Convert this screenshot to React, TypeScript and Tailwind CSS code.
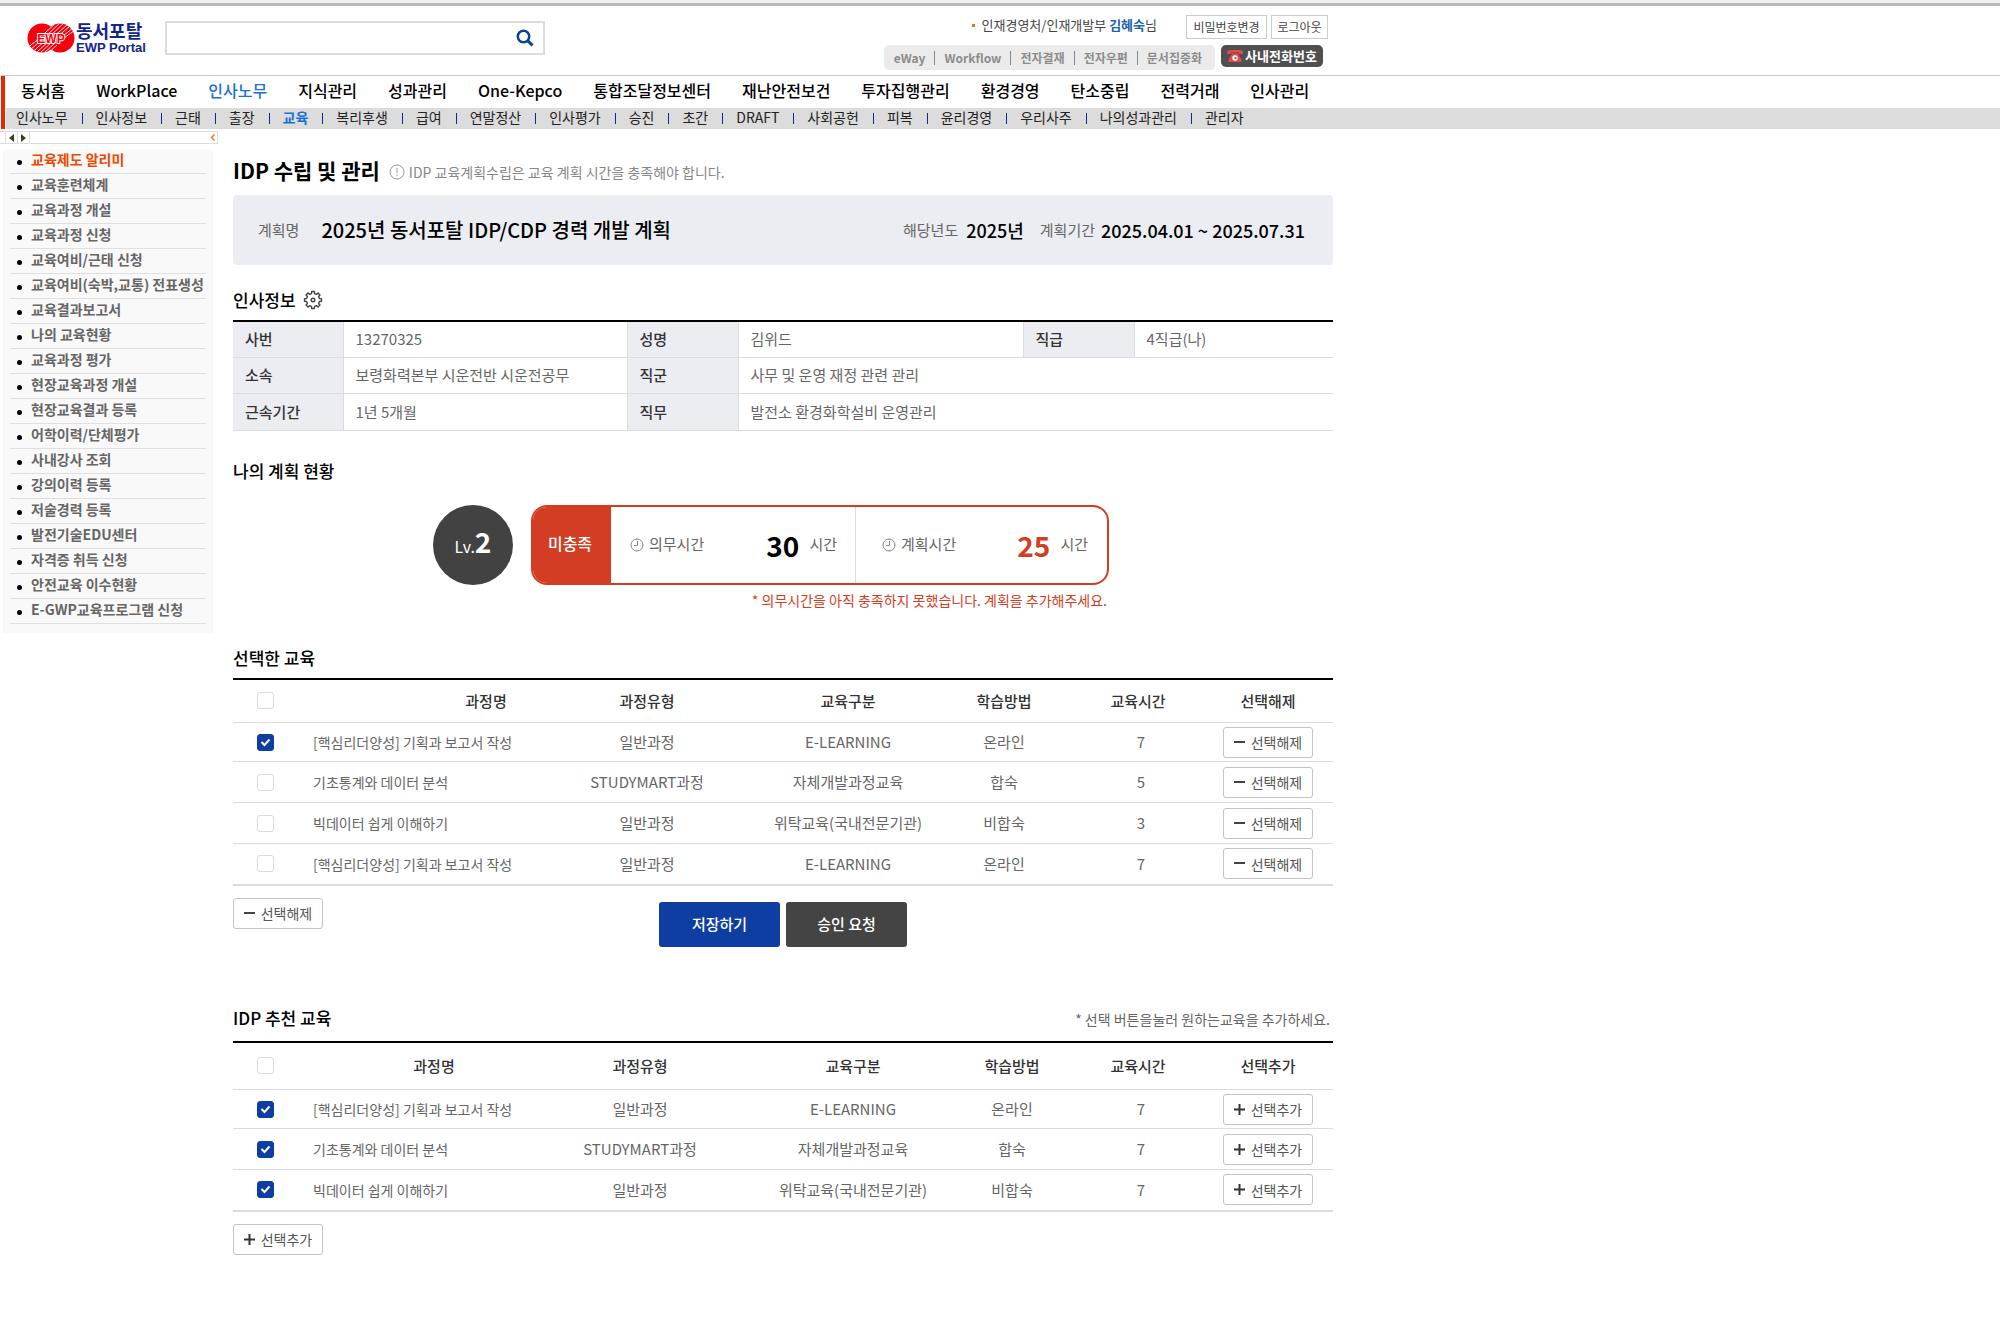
import React from "react";

const mainMenu = ["동서홈", "WorkPlace", "인사노무", "지식관리", "성과관리", "One-Kepco", "통합조달정보센터", "재난안전보건", "투자집행관리", "환경경영", "탄소중립", "전력거래", "인사관리"];

const subMenu = ["인사노무", "인사정보", "근태", "출장", "교육", "복리후생", "급여", "연말정산", "인사평가", "승진", "초간", "DRAFT", "사회공헌", "피복", "윤리경영", "우리사주", "나의성과관리", "관리자"];

const sideMenu = ["교육제도 알리미", "교육훈련체계", "교육과정 개설", "교육과정 신청", "교육여비/근태 신청", "교육여비(숙박,교통) 전표생성", "교육결과보고서", "나의 교육현황", "교육과정 평가", "현장교육과정 개설", "현장교육결과 등록", "어학이력/단체평가", "사내강사 조회", "강의이력 등록", "저술경력 등록", "발전기술EDU센터", "자격증 취득 신청", "안전교육 이수현황", "E-GWP교육프로그램 신청"];

const quickLinks = ["eWay", "Workflow", "전자결재", "전자우편", "문서집중화"];

type Course = { name: string; type: string; kind: string; method: string; hours: number; checked: boolean };

const selectedCourses: Course[] = [
  { name: "[핵심리더양성] 기획과 보고서 작성", type: "일반과정", kind: "E-LEARNING", method: "온라인", hours: 7, checked: true },
  { name: "기초통계와 데이터 분석", type: "STUDYMART과정", kind: "자체개발과정교육", method: "합숙", hours: 5, checked: false },
  { name: "빅데이터 쉽게 이해하기", type: "일반과정", kind: "위탁교육(국내전문기관)", method: "비합숙", hours: 3, checked: false },
  { name: "[핵심리더양성] 기획과 보고서 작성", type: "일반과정", kind: "E-LEARNING", method: "온라인", hours: 7, checked: false },
];

const recommendedCourses: Course[] = [
  { name: "[핵심리더양성] 기획과 보고서 작성", type: "일반과정", kind: "E-LEARNING", method: "온라인", hours: 7, checked: true },
  { name: "기초통계와 데이터 분석", type: "STUDYMART과정", kind: "자체개발과정교육", method: "합숙", hours: 7, checked: true },
  { name: "빅데이터 쉽게 이해하기", type: "일반과정", kind: "위탁교육(국내전문기관)", method: "비합숙", hours: 7, checked: true },
];

function LogoMark() {
  return (
    <svg width="48" height="30" viewBox="0 0 48 30" aria-hidden="true">
      <defs>
        <clipPath id="mark">
          <circle cx="15" cy="15" r="14.5" />
          <circle cx="33" cy="15" r="14.5" />
        </clipPath>
      </defs>
      <circle cx="15" cy="15" r="14.5" fill="#f5000c" />
      <circle cx="33" cy="15" r="14.5" fill="#f5000c" />
      <g clipPath="url(#mark)" stroke="#fff" strokeWidth="0.9">
        <path d="M0 25 13 15M2 28 18 14M5 29.500 22 14M8 31 25 15M12 31 28 16M16 31 29 19M20 31 30 22" />
        <path d="M18 10 29 0M19 13 33 0M21 15 37 0M24 16 41 1M28 16 44 2M32 16 46 5M37 15 48 7" />
      </g>
      <text x="24" y="20" textAnchor="middle" fontSize="12" fontWeight="700" fill="#f5000c" stroke="#fff" strokeWidth="1.8" paintOrder="stroke" fontFamily="Liberation Sans, sans-serif">EWP</text>
    </svg>
  );
}

function PhoneIcon() {
  return (
    <svg width="16" height="14" viewBox="0 0 16 14" aria-hidden="true">
      <path d="M0 5V3.500Q0 1 4 1h8q4 0 4 2.500V5h-4V3.500H4V5Z" fill="#e8484b" />
      <path d="M5 4.500h6l1 2 2.500 4V13h-13v-2.500L4 6.500Z" fill="#e8484b" />
      <circle cx="8" cy="9" r="2.700" fill="#fff" />
      <circle cx="8.500" cy="9" r="1.200" fill="#777" />
    </svg>
  );
}

function GearIcon() {
  const teeth = 8;
  const points: string[] = [];
  for (let i = 0; i < teeth; i++) {
    [[-0.3, 6.6], [-0.2, 8.6], [0.2, 8.6], [0.3, 6.6]].forEach(([offset, radius]) => {
      const a = ((i + offset) / teeth) * Math.PI * 2;
      points.push(`${(10 + radius * Math.sin(a)).toFixed(2)},${(10 - radius * Math.cos(a)).toFixed(2)}`);
    });
  }
  return (
    <svg width="20" height="20" viewBox="0 0 20 20" fill="none" stroke="#444" strokeWidth="1.400" strokeLinejoin="round" aria-hidden="true">
      <polygon points={points.join(" ")} />
      <circle cx="10" cy="10" r="1.800" />
    </svg>
  );
}

function InfoIcon() {
  return (
    <svg width="16" height="16" viewBox="0 0 16 16" fill="none" stroke="#999" aria-hidden="true">
      <circle cx="8" cy="8" r="7" />
      <path d="M8 4v5M8 10.500v1.500" />
    </svg>
  );
}

function ClockIcon() {
  return (
    <svg width="14" height="14" viewBox="0 0 14 14" fill="none" stroke="#888" aria-hidden="true">
      <circle cx="7" cy="7" r="6" />
      <path d="M7.500 3v4.500H4" />
      <path d="M7 1v1M7 12v1M12 7h1" />
    </svg>
  );
}

function Check({ checked, label }: { checked?: boolean; label: string }) {
  return (
    <span className="relative mx-auto block size-[17px]">
      <input
        type="checkbox"
        defaultChecked={checked}
        aria-label={label}
        className="peer block size-[17px] appearance-none rounded-[3px] border border-[#dcdcdc] bg-white checked:border-[#0f3ea3] checked:bg-[#0f3ea3]"
      />
      <svg className="pointer-events-none absolute inset-0 hidden peer-checked:block" width="17" height="17" viewBox="0 0 17 17" fill="none" stroke="#fff" strokeWidth="2" aria-hidden="true">
        <path d="M4.500 8 7.500 11 12.500 5.500" />
      </svg>
    </span>
  );
}

function RowButton({ kind }: { kind: "remove" | "add" }) {
  return (
    <button type="button" className="inline-flex h-[31px] w-[90px] items-center justify-center gap-[6px] rounded-[3px] border border-[#c4c4c4] bg-white align-middle text-sm text-[#555]">
      <svg width="11" height="11" viewBox="0 0 11 11" fill="none" stroke={kind === "add" ? "#333" : "#444"} strokeWidth="2" aria-hidden="true">
        <path d={kind === "add" ? "M0 5.500h11M5.500 0v11" : "M0 5h11"} />
      </svg>
      {kind === "add" ? "선택추가" : "선택해제"}
    </button>
  );
}

function CourseTable({ courses, kind }: { courses: Course[]; kind: "remove" | "add" }) {
  const add = kind === "add";
  return (
    <table className="w-full table-fixed border-t-2 border-b-2 border-t-black border-b-[#dcdcdc] text-center text-[15px] leading-5 text-[#666]">
      <colgroup>
        <col className="w-[64px]" />
        <col className={add ? "w-[228px]" : "w-[236px]"} />
        <col className={add ? "w-[230px]" : "w-[228px]"} />
        <col className={add ? "w-[196px]" : "w-[174px]"} />
        <col className={add ? "w-[122px]" : "w-[138px]"} />
        <col className="w-[130px]" />
        <col className="w-[130px]" />
      </colgroup>
      <thead>
        <tr className={add ? "h-[48px] text-[#333]" : "h-[44px] text-[#333]"}>
          <th><Check label="전체 선택" /></th>
          <th className={add ? "pl-[46px] font-medium" : "pl-[142px] font-medium"}>과정명</th>
          <th className="font-medium">과정유형</th>
          <th className="font-medium">교육구분</th>
          <th className="font-medium">학습방법</th>
          <th className="font-medium">교육시간</th>
          <th className="font-medium">{add ? "선택추가" : "선택해제"}</th>
        </tr>
      </thead>
      <tbody>
        {courses.map((c, i) => (
          <tr key={i} className="h-[41px] border-t border-[#dcdcdc] first:h-[39px]">
            <td><Check checked={c.checked} label={c.name} /></td>
            <td className="pl-4 text-left text-sm whitespace-nowrap">{c.name}</td>
            <td>{c.type}</td>
            <td className="whitespace-nowrap">{c.kind}</td>
            <td>{c.method}</td>
            <td className="pl-[6px]">{c.hours}</td>
            <td><RowButton kind={kind} /></td>
          </tr>
        ))}
      </tbody>
    </table>
  );
}

function Label({ children }: { children: React.ReactNode }) {
  return <th scope="row" className="border-x border-[#dcdcdc] bg-[#ecedf2] pl-3 text-left font-medium text-[#333] first:border-l-0">{children}</th>;
}

function Hours({ label, value, accent }: { label: string; value: number; accent?: boolean }) {
  return (
    <div className={accent ? "flex w-[252px] items-center border-l border-[#dcdcdc] pr-[19px] pl-[26px]" : "flex flex-1 items-center pr-[18px] pl-[19px]"}>
      <ClockIcon />
      <span className="ml-[5px]">{label}</span>
      <span className={accent ? "ml-auto text-[28px] font-bold text-[#d33d23]" : "ml-auto text-[28px] font-bold text-black"}>{value}</span>
      <span className="ml-[10px]">시간</span>
    </div>
  );
}

export default function App() {
  return (
    <div className="min-h-screen bg-white font-['Noto_Sans_CJK_KR','Noto_Sans_CJK_SC',sans-serif] text-black">
      <div className="h-[6px] border-b-[3px] border-[#b8b8b8] bg-[#f0f0f0]" />

      <header className="flex h-[69px] max-w-[1333px] pl-[27px]">
        <a href="#" className="mt-[14px] flex h-[36px] w-[120px] items-center gap-px" aria-label="동서포탈 EWP Portal">
          <LogoMark />
          <span className="flex flex-col text-[#14258c]">
            <span className="text-lg leading-5 font-bold">동서포탈</span>
            <span className="font-['Liberation_Sans',sans-serif] text-[13px] leading-4 font-bold whitespace-nowrap">EWP Portal</span>
          </span>
        </a>
        <form className="mt-[15px] ml-[18px] flex h-[34px] w-[380px] items-center border-2 border-[#dcdcdc]" onSubmit={(e) => e.preventDefault()}>
          <input type="text" aria-label="검색" className="h-full min-w-0 flex-1 px-2 text-sm outline-none" />
          <button type="submit" aria-label="검색" className="mr-[9px]">
            <svg width="18" height="18" viewBox="0 0 18 18" fill="none" stroke="#0b3f99" strokeWidth="2.500" aria-hidden="true">
              <circle cx="7.500" cy="7.500" r="5.700" />
              <path d="m11.500 11.500 5 5" strokeWidth="3" />
            </svg>
          </button>
        </form>

        <div className="ml-auto flex flex-col items-end">
          <div className="mt-[9px] mr-[5px] flex items-center gap-1">
            <p className="mr-[25px] mb-1 flex items-center text-[13px] leading-5 text-[#444]">
              <span className="mr-[7px] size-[3px] bg-[#f07020]" />
              인재경영처/인재개발부&nbsp;<b className="text-[#1c64ac]">김혜숙</b>님
            </p>
            <button type="button" className="h-6 w-[81px] border border-[#ccc] text-xs text-[#444]">비밀번호변경</button>
            <button type="button" className="h-6 w-[57px] border border-[#ccc] text-xs text-[#444]">로그아웃</button>
          </div>
          <div className="mt-[6px] mr-[10px] flex items-start gap-[6px]">
            <nav className="flex h-[25px] items-center rounded-[5px] bg-[#ebebeb] pr-1 pl-[10px] text-xs font-bold text-[#8c8c8c]">
              {quickLinks.map((q) => (
                <a key={q} href="#" className="mr-[9px] border-l border-[#888] pl-[9px] leading-[14px] first:border-l-0 first:pl-0">{q}</a>
              ))}
            </nav>
            <button type="button" className="flex h-[22px] w-[102px] items-center justify-center gap-[2px] rounded-[5px] bg-[#505050] text-[13px] font-bold text-white">
              <PhoneIcon />
              사내전화번호
            </button>
          </div>
        </div>
      </header>

      <div className="ml-px border-t border-[#c8c8c8]">
        <div className="border-l-4 border-[#e82800]">
          <nav className="flex h-[32px] items-center gap-[31px] pb-[5px] pl-4 text-base font-medium whitespace-nowrap">
            {mainMenu.map((m, i) => (
              <a key={m} href="#" className={i === 2 ? "text-[#1b70d8]" : ""}>{m}</a>
            ))}
          </nav>
          <nav className="ml-px flex h-[21px] items-center bg-[#dcdcdc] pb-[4px] text-sm leading-4 whitespace-nowrap text-[#222]">
            {subMenu.map((m, i) => (
              <span key={i} className="flex items-center">
                {i > 0 && <i className="mt-[3px] h-[11px] w-px bg-[#14258c]" />}
                <a href="#" className={i === 4 ? "mr-[14px] ml-[13px] font-bold text-[#1b70d8]" : i === 0 ? "mr-[14px] ml-[10px]" : "mr-[14px] ml-[13px]"}>{m}</a>
              </span>
            ))}
          </nav>
        </div>
      </div>

      <div className="flex">
        <aside className="w-[218px] shrink-0">
          <div className="mt-[2px] flex h-[13px] items-center justify-between border border-l-0 border-[#ddd] pr-[2px]">
            <div className="flex h-full pl-[5px]">
              <button type="button" aria-label="이전" className="flex w-3 items-center justify-center border-l border-[#ddd]">
                <svg width="5" height="8" viewBox="0 0 5 8" aria-hidden="true"><path d="M5 0v8L0 4Z" fill="#3c4020" /></svg>
              </button>
              <button type="button" aria-label="다음" className="flex w-[13px] items-center justify-center border-x border-[#ddd]">
                <svg width="5" height="8" viewBox="0 0 5 8" aria-hidden="true"><path d="M0 0v8l5-4Z" fill="#3c4020" /></svg>
              </button>
            </div>
            <button type="button" aria-label="메뉴 접기">
              <svg width="5" height="7" viewBox="0 0 5 7" fill="none" stroke="#f07830" strokeWidth="1.500" aria-hidden="true"><path d="M4.500.5l-3 3 3 3" /></svg>
            </button>
          </div>
          <ul className="mt-[5px] mr-[5px] ml-[3px] bg-[#f9f9f9] px-[7px] pb-[9px]">
            {sideMenu.map((m, i) => (
              <li key={m} className="flex h-[25px] items-center border-b border-[#e0e0e0] pb-[4px] pl-[7px]">
                <span className="mt-[7px] mr-[9px] size-[5px] rounded-full bg-black" />
                <a href="#" className={i === 0 ? "text-sm leading-5 font-bold whitespace-nowrap text-[#f04800]" : "text-sm leading-5 font-bold whitespace-nowrap text-[#666]"}>{m}</a>
              </li>
            ))}
          </ul>
        </aside>

        <main className="ml-[15px] w-full max-w-[1100px]">
          <div className="mt-[24px] flex h-[38px] items-center">
            <h1 className="pb-[3px] text-[21px] font-bold">IDP 수립 및 관리</h1>
            <p className="ml-[9px] flex items-center gap-[4px] text-sm text-[#888]">
              <InfoIcon />
              IDP 교육계획수립은 교육 계획 시간을 충족해야 합니다.
            </p>
          </div>

          <section className="mt-[4px] flex h-[70px] items-center rounded-[4px] bg-[#ecedf2] pr-[28px] pl-[25px] text-[15px] text-[#666]">
            <span>계획명</span>
            <strong className="ml-[22px] text-xl font-medium text-black">2025년 동서포탈 IDP/CDP 경력 개발 계획</strong>
            <span className="ml-auto">해당년도</span>
            <strong className="ml-[8px] text-lg font-medium text-black">2025년</strong>
            <span className="ml-[16px]">계획기간</span>
            <strong className="ml-[6px] text-lg font-medium text-black">2025.04.01 ~ 2025.07.31</strong>
          </section>

          <div className="mt-[22px] flex h-[25px] items-center gap-[7px]">
            <h2 className="text-[17px] font-medium">인사정보</h2>
            <button type="button" aria-label="설정"><GearIcon /></button>
          </div>
          <table className="mt-[8px] w-full table-fixed border-t-2 border-t-black text-[15px] leading-5 text-[#666]">
            <colgroup>
              <col className="w-[110px]" />
              <col className="w-[284px]" />
              <col className="w-[111px]" />
              <col className="w-[285px]" />
              <col className="w-[111px]" />
              <col className="w-[199px]" />
            </colgroup>
            <tbody>
              <tr className="h-[36px] border-b border-[#dcdcdc]">
                <Label>사번</Label><td className="pl-3">13270325</td>
                <Label>성명</Label><td className="pl-3">김위드</td>
                <Label>직급</Label><td className="pl-3">4직급(나)</td>
              </tr>
              <tr className="h-[36px] border-b border-[#dcdcdc]">
                <Label>소속</Label><td className="pl-3">보령화력본부 시운전반 시운전공무</td>
                <Label>직군</Label><td className="pl-3" colSpan={3}>사무 및 운영 재정 관련 관리</td>
              </tr>
              <tr className="h-[37px] border-b border-[#dcdcdc]">
                <Label>근속기간</Label><td className="pl-3">1년 5개월</td>
                <Label>직무</Label><td className="pl-3" colSpan={3}>발전소 환경화학설비 운영관리</td>
              </tr>
            </tbody>
          </table>

          <h2 className="mt-[27px] text-[17px] leading-[25px] font-medium">나의 계획 현황</h2>
          <div className="mt-[22px] flex justify-center gap-[18px] pr-[24px]">
            <div className="flex size-20 items-baseline justify-center rounded-full bg-[#424242] pt-[14px] text-white">
              <span className="text-base">Lv.</span>
              <span className="text-[28px] leading-[44px] font-bold">2</span>
            </div>
            <div className="w-[578px]">
              <div className="flex h-20 overflow-hidden rounded-2xl border-2 border-[#d33d23] text-[15px] text-[#666]">
                <div className="flex w-[78px] items-center justify-center bg-[#d33d23] pr-1 pb-1 text-base font-medium text-white">미충족</div>
                <Hours label="의무시간" value={30} />
                <Hours label="계획시간" value={25} accent />
              </div>
              <p className="mt-[5px] pr-[2px] text-right text-sm leading-5 text-[#d33d23]">* 의무시간을 아직 충족하지 못했습니다. 계획을 추가해주세요.</p>
            </div>
          </div>

          <h2 className="mt-[35px] mb-[8px] text-[17px] leading-[25px] font-medium">선택한 교육</h2>
          <CourseTable courses={selectedCourses} kind="remove" />
          <div className="mt-[12px] grid grid-cols-[1fr_auto_1fr] items-start">
            <div><RowButton kind="remove" /></div>
            <div className="mt-[4px] flex gap-[6px] text-[15px] font-medium text-white">
              <button type="button" className="h-[45px] w-[121px] rounded-[3px] bg-[#0f3ea3]">저장하기</button>
              <button type="button" className="h-[45px] w-[121px] rounded-[3px] bg-[#444]">승인 요청</button>
            </div>
          </div>

          <div className="mt-[58px] mb-[11px] flex items-center justify-between">
            <h2 className="text-[17px] leading-[25px] font-medium">IDP 추천 교육</h2>
            <p className="pt-[3px] pr-[3px] text-sm text-[#666]">* 선택 버튼을눌러 원하는교육을 추가하세요.</p>
          </div>
          <CourseTable courses={recommendedCourses} kind="add" />
          <div className="mt-[12px]"><RowButton kind="add" /></div>
        </main>
      </div>
    </div>
  );
}
